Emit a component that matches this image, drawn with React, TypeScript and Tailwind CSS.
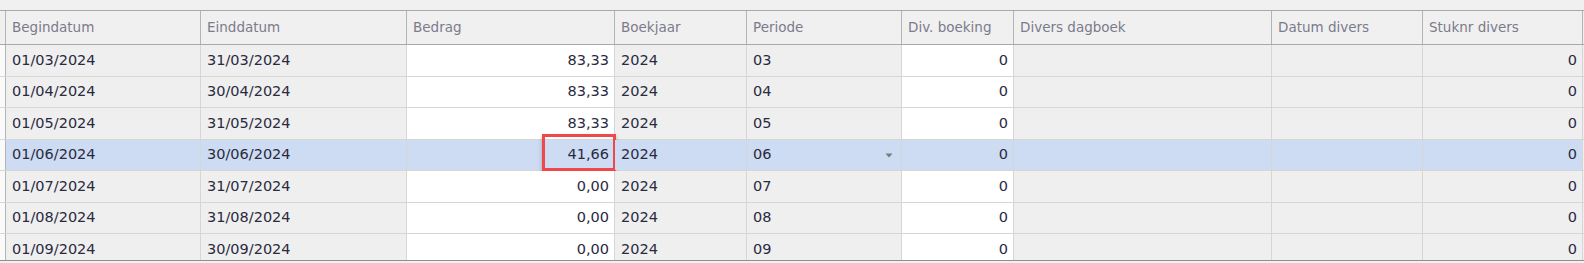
const columns = [
  { key: "begin", label: "Begindatum", width: "w-[195px]", align: "left" },
  { key: "eind", label: "Einddatum", width: "w-[206px]", align: "left" },
  { key: "bedrag", label: "Bedrag", width: "w-[208px]", align: "right", editable: true },
  { key: "jaar", label: "Boekjaar", width: "w-[132px]", align: "left" },
  { key: "periode", label: "Periode", width: "w-[155px]", align: "left" },
  { key: "div", label: "Div. boeking", width: "w-[112px]", align: "right", editable: true },
  { key: "dagboek", label: "Divers dagboek", width: "w-[258px]", align: "left" },
  { key: "datum", label: "Datum divers", width: "w-[151px]", align: "left" },
  { key: "stuknr", label: "Stuknr divers", width: "w-[160px]", align: "right" },
];

const rows = [
  { begin: "01/03/2024", eind: "31/03/2024", bedrag: "83,33", jaar: "2024", periode: "03", div: "0", dagboek: "", datum: "", stuknr: "0", h: "h-[32px]" },
  { begin: "01/04/2024", eind: "30/04/2024", bedrag: "83,33", jaar: "2024", periode: "04", div: "0", dagboek: "", datum: "", stuknr: "0", h: "h-[31px]" },
  { begin: "01/05/2024", eind: "31/05/2024", bedrag: "83,33", jaar: "2024", periode: "05", div: "0", dagboek: "", datum: "", stuknr: "0", h: "h-[32px]" },
  { begin: "01/06/2024", eind: "30/06/2024", bedrag: "41,66", jaar: "2024", periode: "06", div: "0", dagboek: "", datum: "", stuknr: "0", h: "h-[31px]", focused: true },
  { begin: "01/07/2024", eind: "31/07/2024", bedrag: "0,00", jaar: "2024", periode: "07", div: "0", dagboek: "", datum: "", stuknr: "0", h: "h-[32px]" },
  { begin: "01/08/2024", eind: "31/08/2024", bedrag: "0,00", jaar: "2024", periode: "08", div: "0", dagboek: "", datum: "", stuknr: "0", h: "h-[31px]" },
  { begin: "01/09/2024", eind: "30/09/2024", bedrag: "0,00", jaar: "2024", periode: "09", div: "0", dagboek: "", datum: "", stuknr: "0", h: "h-[32px]" },
];

type Row = (typeof rows)[number];

export default function App() {
  return (
    <div className="w-[1584px] h-[263px] overflow-hidden bg-[#f0f0f0] font-['DejaVu_Sans',sans-serif] text-[14.5px]">
      <div className="h-[10px]" />
      {/* header */}
      <div className="flex h-[35px] border-y border-[#a9a9a9] bg-[#f0f0f0] text-[#7b7b8c] text-[13.5px]">
        <div className="w-[6px] shrink-0 border-r border-[#b4b4b4]" />
        {columns.map((c) => (
          <div key={c.key} className={`${c.width} shrink-0 flex items-center px-[6px] border-r border-[#b4b4b4] whitespace-nowrap`}>
            {c.label}
          </div>
        ))}
      </div>
      {/* body */}
      <div className="h-[216px] overflow-hidden border-b border-[#8f8f8f]">
        {rows.map((r, i) => (
          <GridRow key={i} row={r} />
        ))}
      </div>
    </div>
  );
}

function GridRow({ row }: { row: Row }) {
  const focused = !!row.focused;
  return (
    <div className={`flex ${row.h} shrink-0 border-b border-[#d6d6d6] text-[#2a2a40]`}>
      <div className="w-[6px] shrink-0 bg-[#fafafa] border-r border-[#b4b4b4]" />
      {columns.map((c) => {
        const value = row[c.key as keyof Row] as string;
        const bg = focused ? "bg-[#cddcf3]" : c.editable ? "bg-white" : "bg-[#efefef]";
        return (
          <div
            key={c.key}
            className={`${c.width} ${bg} relative shrink-0 flex items-center border-r border-[#d6d6d6] whitespace-nowrap ${
              c.align === "right" ? "justify-end pr-[5px] pl-[6px]" : "px-[6px]"
            }`}
          >
            {value}
            {focused && c.key === "periode" && (
              <svg className="absolute right-[8px] top-[13px]" width="8" height="5" viewBox="0 0 8 5">
                <path d="M0.5 0.5 L7.5 0.5 L4 4.5 Z" fill="#7a7a7a" />
              </svg>
            )}
            {focused && c.key === "bedrag" && (
              <div className="absolute left-[135px] top-[-6px] w-[74px] h-[37px] border-[3px] border-[#f0474a] shadow-[0_2px_4px_rgba(0,0,0,0.25)]" />
            )}
          </div>
        );
      })}
    </div>
  );
}
